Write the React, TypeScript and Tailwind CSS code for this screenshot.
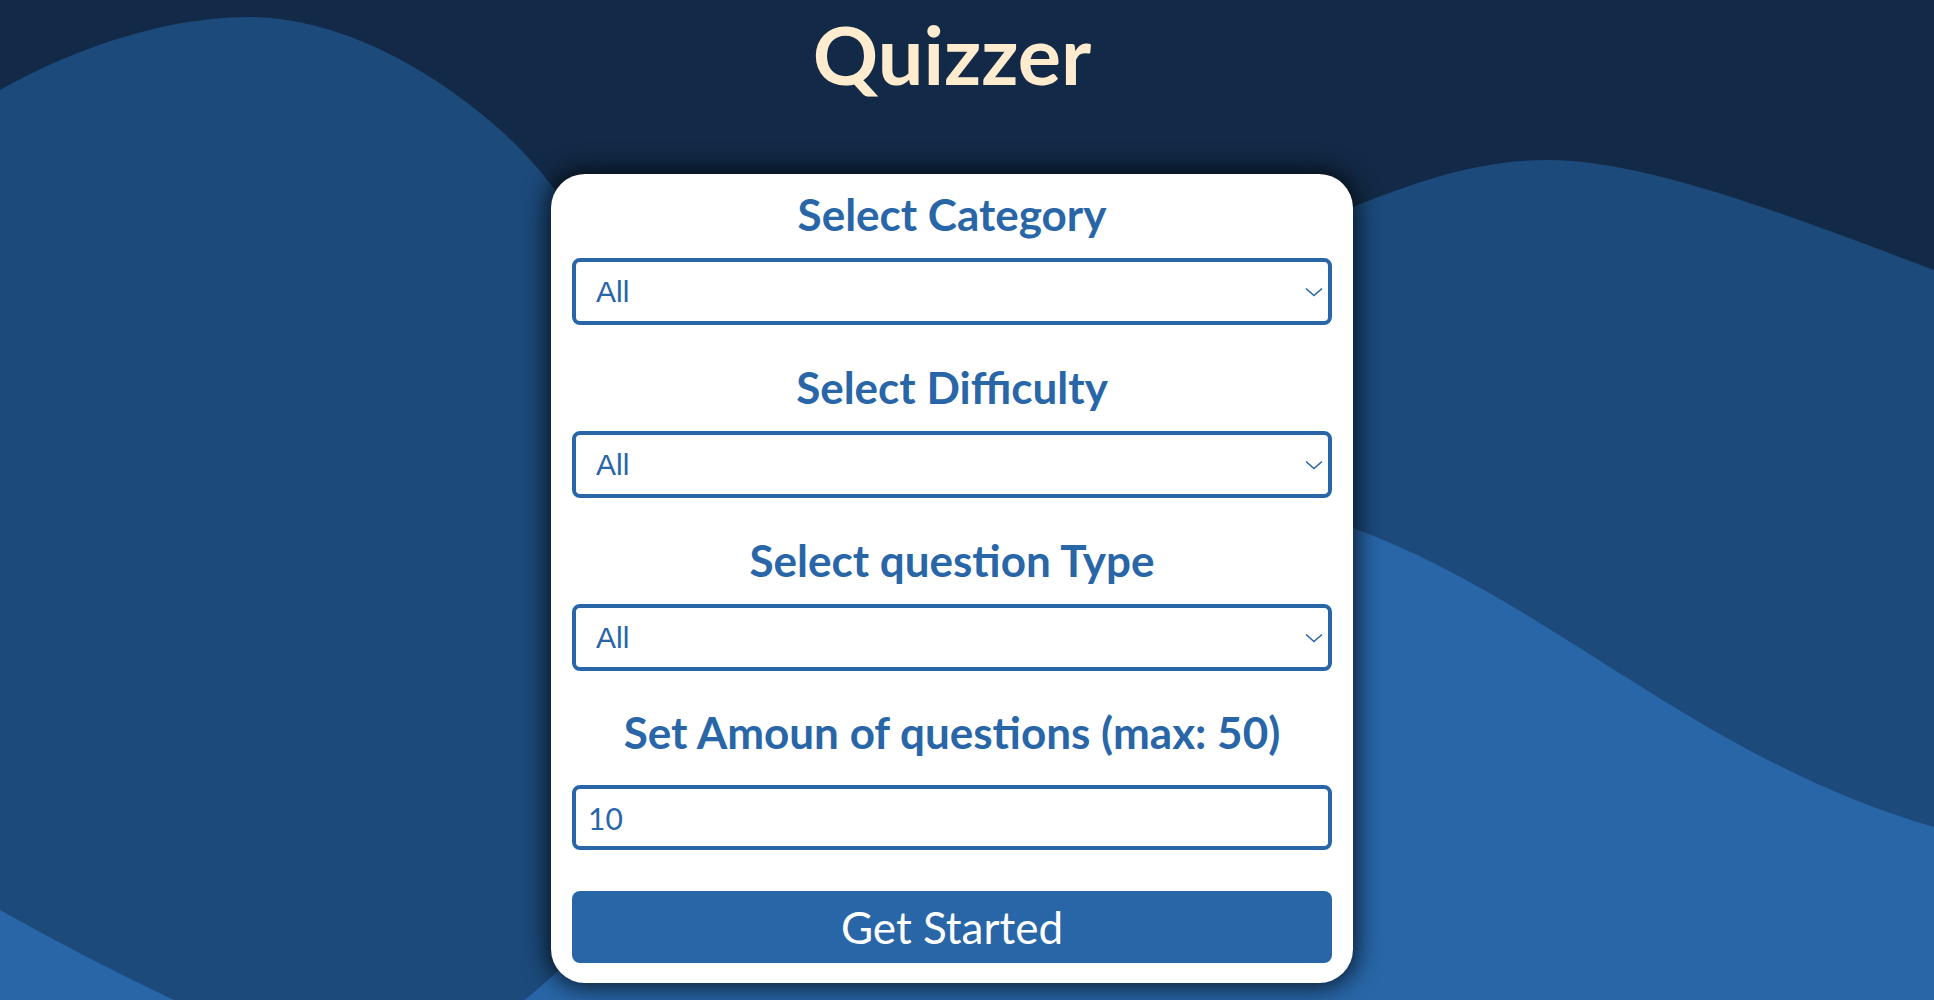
import React from "react";

const blue = "text-[#2866a8]";

function Waves() {
  return (
    <svg
      className="absolute inset-0 w-full h-full"
      viewBox="0 0 1934 1000"
      preserveAspectRatio="none"
      aria-hidden="true"
    >
      <path
        d="M0,90 C80,45 170,17 249,17 C330,17 420,60 497,127 C520,147 540,170 555,190 C750,420 1150,300 1353,207 C1420,180 1480,160 1548,160 C1650,160 1800,220 1934,270 L1934,1000 L0,1000 Z"
        fill="#1c4a7b"
      />
      <path
        d="M0,910 C80,955 160,995 240,1030 C500,1150 600,900 800,700 C1000,520 1200,470 1353,528 C1550,600 1700,760 1934,827 L1934,1000 L0,1000 Z"
        fill="#2866a8"
      />
    </svg>
  );
}

function Chevron() {
  return (
    <svg
      className="absolute right-[9px] top-1/2 -translate-y-1/2 pointer-events-none"
      width="18"
      height="10"
      viewBox="0 0 18 10"
      fill="none"
    >
      <path d="M1 1.5 L9 8.5 L17 1.5" stroke="#2866a8" strokeWidth="1.6" />
    </svg>
  );
}

function Heading({ children, className = "" }: { children: React.ReactNode; className?: string }) {
  return (
    <h2 className={`text-[44px] leading-[52px] font-bold text-center ${blue} ${className}`}>
      {children}
    </h2>
  );
}

function Select({ className = "" }: { className?: string }) {
  return (
    <div className={`relative font-['Liberation_Sans'] ${className}`}>
      <select
        defaultValue="all"
        className={`appearance-none w-full h-[67px] bg-white border-4 border-[#2866a8] rounded-lg pl-[20px] pr-10 text-[30px] ${blue} font-['Liberation_Sans'] outline-none`}
      >
        <option value="all">All</option>
      </select>
      <Chevron />
    </div>
  );
}

export default function App() {
  return (
    <div className="relative h-[1000px] w-full overflow-hidden bg-[#122a47] font-['Lato',sans-serif]">
      <Waves />
      <div className="relative flex flex-col items-center pr-[30px]">
        <h1 className="mt-[6px] text-[81px] leading-[96px] font-bold text-[#ffebcd]">Quizzer</h1>

        <div className="mt-[72px] w-[802px] bg-white rounded-[34px] px-[21px] pt-[14px] pb-[20px] shadow-[0_0_24px_4px_rgba(0,0,0,0.75)] flex flex-col">
          <Heading>Select Category</Heading>
          <Select className="mt-[18px]" />

          <Heading className="mt-[36px]">Select Difficulty</Heading>
          <Select className="mt-[18px]" />

          <Heading className="mt-[36px]">Select question Type</Heading>
          <Select className="mt-[18px]" />

          <Heading className="mt-[35px]">Set Amoun of questions (max: 50)</Heading>
          <input
            type="number"
            defaultValue={10}
            className={`mt-[27px] w-full h-[65px] bg-white border-4 border-[#2866a8] rounded-lg pl-[12px] text-[30px] ${blue} outline-none`}
          />

          <button className="mt-[41px] h-[72px] w-full rounded-lg bg-[#2866a8] text-white text-[44px] leading-none">
            Get Started
          </button>
        </div>
      </div>
    </div>
  );
}
